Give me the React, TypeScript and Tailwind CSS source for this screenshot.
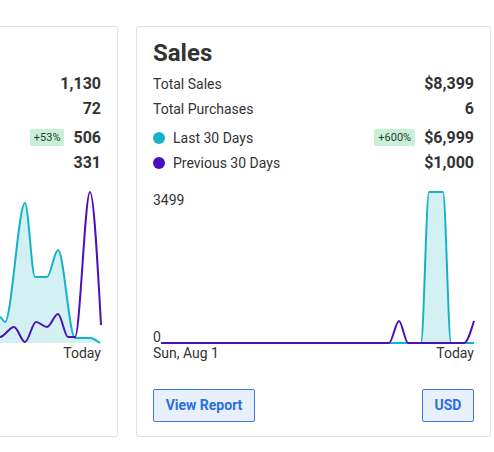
import React from "react";

type P = [number, number];

function monotonePath(pts: P[]): string {
  const n = pts.length;
  if (n < 2) return "";
  const h: number[] = [];
  const d: number[] = [];
  for (let i = 0; i < n - 1; i++) {
    h.push(pts[i + 1][0] - pts[i][0]);
    d.push((pts[i + 1][1] - pts[i][1]) / (pts[i + 1][0] - pts[i][0]));
  }
  const m: number[] = new Array(n).fill(0);
  for (let i = 1; i < n - 1; i++) {
    const s0 = d[i - 1];
    const s1 = d[i];
    if (s0 * s1 <= 0) {
      m[i] = 0;
    } else {
      const p = (s0 * h[i] + s1 * h[i - 1]) / (h[i - 1] + h[i]);
      m[i] = (Math.sign(s0) + Math.sign(s1)) * Math.min(Math.abs(s0), Math.abs(s1), 0.5 * Math.abs(p));
    }
  }
  m[0] = n > 2 ? (3 * d[0] - m[1]) / 2 : d[0];
  if (Math.sign(m[0]) !== Math.sign(d[0])) m[0] = 0;
  m[n - 1] = n > 2 ? (3 * d[n - 2] - m[n - 2]) / 2 : d[n - 2];
  if (Math.sign(m[n - 1]) !== Math.sign(d[n - 2])) m[n - 1] = 0;
  let s = `M${pts[0][0]},${pts[0][1]}`;
  for (let i = 0; i < n - 1; i++) {
    const [x0, y0] = pts[i];
    const [x1, y1] = pts[i + 1];
    const dx = h[i] / 3;
    s += ` C${x0 + dx},${y0 + m[i] * dx} ${x1 - dx},${y1 - m[i + 1] * dx} ${x1},${y1}`;
  }
  return s;
}

const BASE = 153;

function Chart({ teal, purple, max }: { teal: P[]; purple: P[]; max: string }) {
  const tealLine = monotonePath(teal);
  const area = `${tealLine} L${teal[teal.length - 1][0]},${BASE} L${teal[0][0]},${BASE} Z`;
  return (
    <div className="relative mt-[15px] h-[153px] w-full">
      <svg width="322" height="153" viewBox="0 0 322 153" className="absolute left-0 top-0 overflow-visible">
        <path d={area} fill="#d3f0f3" />
        <path d={tealLine} fill="none" stroke="#14b4c6" strokeWidth="2" />
        <path d={monotonePath(purple)} fill="none" stroke="#4a10bd" strokeWidth="2" />
      </svg>
      <div className="absolute left-0 top-0 text-[14px] leading-5 text-[#333]">{max}</div>
      <div className="absolute left-0 top-[137px] text-[14px] leading-5 text-[#333]">0</div>
    </div>
  );
}

function Row({ label, value, dot, badge }: { label: string; value: string; dot?: string; badge?: string }) {
  return (
    <div className="flex h-[25px] items-center">
      {dot && <span className={`mr-2 h-3 w-3 rounded-full ${dot}`} />}
      <span className="text-[14px] leading-5 text-[#333]">{label}</span>
      <span className="flex-1" />
      {badge && (
        <span className="mr-[9px] rounded-[2px] bg-[#c8f0d6] px-1 text-[11px] leading-[17px] text-[#2d3b32]">{badge}</span>
      )}
      <span className="text-[16px] font-bold leading-6 text-[#333]">{value}</span>
    </div>
  );
}

function Card({
  title,
  rows,
  teal,
  purple,
  max,
  usd,
}: {
  title: string;
  rows: [string, string, string | undefined][];
  teal: P[];
  purple: P[];
  max: string;
  usd?: boolean;
}) {
  return (
    <div className="flex h-[411px] w-[355px] shrink-0 flex-col rounded-[3px] border border-[#dfe1e7] bg-white px-4 pt-[10px]">
      <div className="h-8 text-[24px] font-bold leading-8 text-[#333]">{title}</div>
      <div className="mt-[2px]">
        <Row label={rows[0][0]} value={rows[0][1]} />
        <Row label={rows[1][0]} value={rows[1][1]} />
      </div>
      <div className="mt-1">
        <Row label={rows[2][0]} value={rows[2][1]} badge={rows[2][2]} dot="bg-[#14b4c6]" />
        <Row label={rows[3][0]} value={rows[3][1]} dot="bg-[#4a10bd]" />
      </div>
      <Chart teal={teal} purple={purple} max={max} />
      <div className="flex h-5 items-center justify-between text-[14px] leading-5 text-[#333]">
        <span>Sun, Aug 1</span>
        <span>Today</span>
      </div>
      <div className="mt-[26px] flex items-center justify-between">
        <button className="flex h-[33px] w-[102px] items-center justify-center rounded-[2px] border border-[#3a76e4] bg-[#e8f0fe] text-[14px] font-bold text-[#2a6ee3]">
          View Report
        </button>
        {usd && (
          <button className="flex h-[33px] w-[52px] items-center justify-center rounded-[2px] border border-[#3a76e4] bg-[#e8f0fe] text-[14px] font-bold text-[#2a6ee3]">
            USD
          </button>
        )}
      </div>
    </div>
  );
}

export default function App() {
  const leftTeal: P[] = [
    [8, 153], [60, 140], [110, 122], [160, 136], [200, 126], [220, 127], [225, 132], [245, 13], [255, 87], [267, 87], [278, 60], [295, 148], [310, 148], [320, 153],
  ];
  const leftPurple: P[] = [
    [8, 153], [50, 145], [100, 150], [150, 140], [190, 148], [220, 147], [234, 137], [245, 152], [256, 132], [267, 137], [278, 124], [288, 147], [295, 147], [310, 2], [321, 135],
  ];
  const rightTeal: P[] = [
    [8, 153], [236, 153], [268, 153], [276, 2], [290, 2], [298, 153], [321, 153],
  ];
  const rightPurple: P[] = [
    [8, 153], [236, 153], [246, 131], [255, 153], [311, 153], [321, 131],
  ];
  return (
    <div className="h-[452px] w-[494px] overflow-hidden bg-white" style={{ fontFamily: "Roboto, 'Liberation Sans', sans-serif" }}>
      <div className="ml-[-237px] flex gap-[18px] pt-[26px]">
        <Card
          title="Visitors"
          rows={[
            ["Total Visits", "1,130", undefined],
            ["Unique Visitors", "72", undefined],
            ["Last 30 Days", "506", "+53%"],
            ["Previous 30 Days", "331", undefined],
          ]}
          teal={leftTeal}
          purple={leftPurple}
          max="88"
        />
        <Card
          title="Sales"
          rows={[
            ["Total Sales", "$8,399", undefined],
            ["Total Purchases", "6", undefined],
            ["Last 30 Days", "$6,999", "+600%"],
            ["Previous 30 Days", "$1,000", undefined],
          ]}
          teal={rightTeal}
          purple={rightPurple}
          max="3499"
          usd
        />
      </div>
    </div>
  );
}
